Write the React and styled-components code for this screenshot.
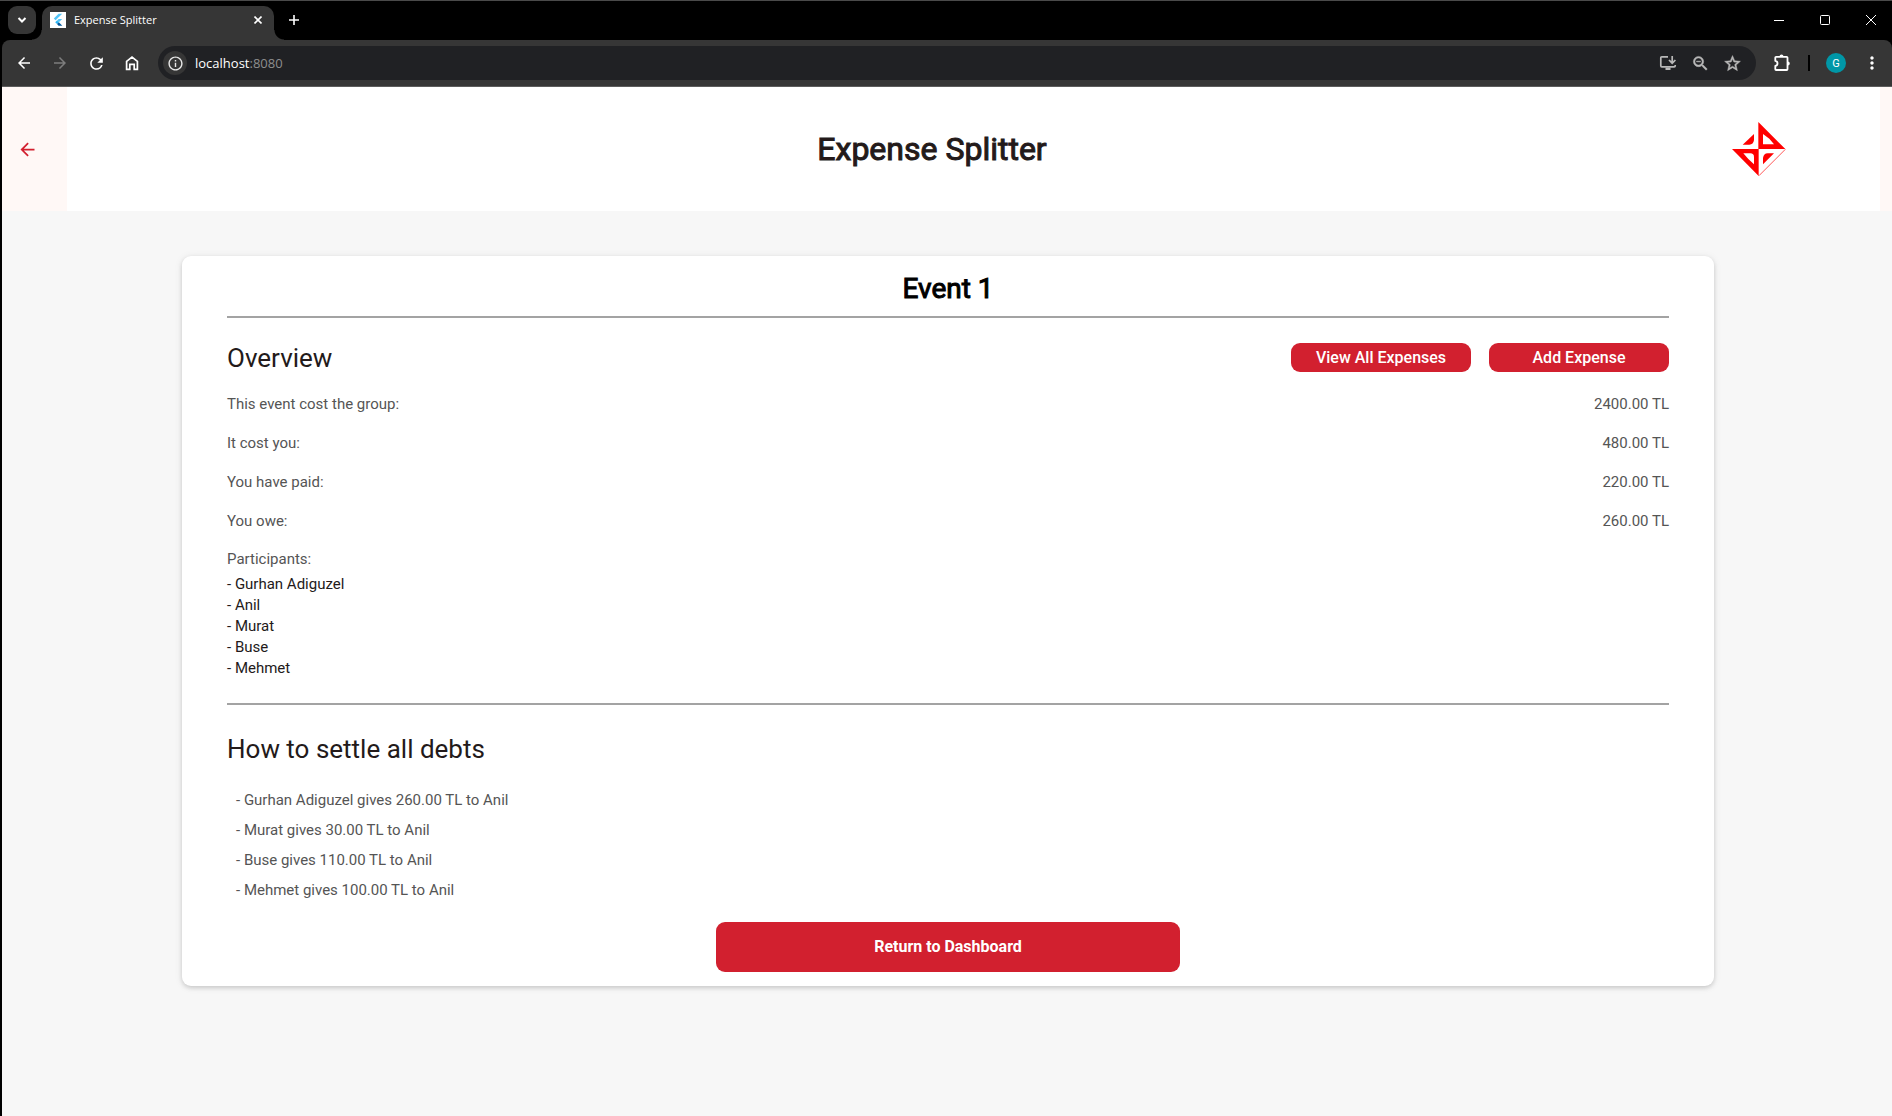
import React from "react";
import styled, { createGlobalStyle, css } from "styled-components";
import {
  MdArrowBack,
  MdArrowForward,
  MdRefresh,
  MdInfoOutline,
  MdZoomOut,
  MdStarBorder,
  MdMoreVert,
} from "react-icons/md";

const overviewRows = [
  { label: "This event cost the group:", amount: "2400.00 TL" },
  { label: "It cost you:", amount: "480.00 TL" },
  { label: "You have paid:", amount: "220.00 TL" },
  { label: "You owe:", amount: "260.00 TL" },
];

const participants = ["Gurhan Adiguzel", "Anil", "Murat", "Buse", "Mehmet"];

const settlements = [
  "Gurhan Adiguzel gives 260.00 TL to Anil",
  "Murat gives 30.00 TL to Anil",
  "Buse gives 110.00 TL to Anil",
  "Mehmet gives 100.00 TL to Anil",
];

const GlobalStyle = createGlobalStyle`
  *, *::before, *::after { box-sizing: border-box; }
  html, body, #root { height: 100%; }
  body {
    margin: 0;
    background: #000;
    font-family: Roboto, "Liberation Sans", sans-serif;
  }
  h1, h2, h3, p, ul, dl, dd { margin: 0; padding: 0; }
  ul { list-style: none; }
  button { border: 0; padding: 0; background: none; font: inherit; cursor: pointer; }
`;

const Window = styled.div`
  display: flex;
  flex-direction: column;
  min-height: 100%;
  padding-left: 2px;
  border-top: 1px solid #4a4a4a;
  background: #000;
`;

/* Browser chrome */

const TabStrip = styled.div`
  display: flex;
  height: 39px;
  padding-left: 6px;
  color: #e8e8e8;
`;

const TabSearch = styled.button`
  display: grid;
  place-items: center;
  width: 28px;
  height: 28px;
  margin: 5px 6px 0 0;
  border-radius: 9px;
  background: #363636;
  color: #fff;
`;

const Tab = styled.div`
  position: relative;
  display: flex;
  align-items: center;
  width: 232px;
  height: 34px;
  margin-top: 5px;
  padding: 0 8px 6px;
  border-radius: 10px 10px 0 0;
  background: #363636;
  color: #fff;

  &::before,
  &::after {
    content: "";
    position: absolute;
    bottom: 0;
    width: 10px;
    height: 10px;
  }
  &::before {
    right: 100%;
    background: radial-gradient(circle at 0 0, transparent 9px, #363636 10px);
  }
  &::after {
    left: 100%;
    background: radial-gradient(circle at 100% 0, transparent 9px, #363636 10px);
  }
`;

const TabTitle = styled.span`
  flex: 1;
  padding-left: 8px;
  font: 11px/16px "Open Sans", "Noto Sans", sans-serif;
`;

const StripButton = styled.button`
  display: grid;
  place-items: center;
  width: ${(p) => p.$width}px;
  height: ${(p) => p.$height}px;
  color: #fff;
`;

const NewTab = styled(StripButton)`
  margin: 5px auto 0 6px;
`;

const WindowControls = styled.div`
  display: flex;
  height: 38px;
`;

const WindowControl = styled.button`
  display: grid;
  place-items: center;
  width: 46px;
  padding-left: 4px;
  color: #fff;
`;

const Toolbar = styled.div`
  display: flex;
  align-items: center;
  height: 47px;
  padding: 0 2px 0 4px;
  border-bottom: 1px solid #5c5c5c;
  border-radius: 8px 8px 0 0;
  background: #363636;
`;

const ToolButton = styled.button`
  display: grid;
  place-items: center;
  width: 36px;
  height: 34px;
  color: ${(p) => (p.$dim ? "#7d7d7d" : "#fff")};
`;

const AddressBar = styled.form`
  display: flex;
  flex: 1;
  align-items: center;
  height: 34px;
  margin: 0 8px;
  padding: 0 8px 0 5px;
  border-radius: 17px;
  background: #202124;
`;

const SiteInfo = styled.button`
  display: grid;
  place-items: center;
  width: 24px;
  height: 24px;
  border-radius: 50%;
  background: #363636;
  color: #e8e8e8;
`;

const Address = styled.div`
  display: flex;
  flex: 1;
  padding-left: 8px;
  color: #fff;
  font: 13px/20px "Open Sans", "Noto Sans", sans-serif;
`;

const Port = styled.span`
  color: #8e8e8e;
`;

const AddressAction = styled.button`
  display: grid;
  place-items: center;
  width: 32px;
  height: 32px;
  color: #b8b8b8;

  svg {
    stroke: currentColor;
  }
  path[fill="none"] {
    stroke: none;
  }
`;

const ToolDivider = styled.span`
  width: 2px;
  height: 16px;
  margin: 0 8px;
  background: #000;
`;

const Avatar = styled.span`
  display: grid;
  place-items: center;
  width: 20px;
  height: 20px;
  border-radius: 50%;
  background: #0097a7;
  color: #fff;
  font-size: 11px;
`;

/* Application */

const Page = styled.div`
  flex: 1;
  background: #f7f7f7;
`;

const Header = styled.header`
  display: grid;
  grid-template-columns: 65px 1fr 148px 12px;
  height: 124px;
  align-items: center;
  background: #fff;
`;

const BackButton = styled.button`
  display: flex;
  align-items: center;
  align-self: stretch;
  padding-left: 15px;
  background: #fff8f6;
  color: #d2202f;
`;

const AppTitle = styled.h1`
  padding-left: 65px;
  color: #231a1a;
  font-size: 32px;
  line-height: 40px;
  font-weight: 400;
  -webkit-text-stroke: 1px currentColor;
  text-align: center;
`;

const HeaderEdge = styled.div`
  align-self: stretch;
  background: #fff8f6;
`;

const Content = styled.main`
  padding: 45px 178px 45px 180px;
`;

const Card = styled.article`
  padding: 17px 45px 14px;
  border-radius: 9px;
  background: #fff;
  box-shadow: 0 2px 4px rgba(0, 0, 0, 0.14), 0 1px 8px rgba(0, 0, 0, 0.08);
`;

const EventTitle = styled.h2`
  padding-bottom: 11px;
  border-bottom: 2px solid #a3a3a3;
  color: #000;
  font-size: 28px;
  line-height: 32px;
  font-weight: 400;
  -webkit-text-stroke: 1px currentColor;
  text-align: center;
`;

const SectionHead = styled.div`
  display: flex;
  align-items: flex-start;
  gap: 18px;
  padding-top: ${(p) => p.$top}px;
`;

const SectionTitle = styled.h3`
  flex: 1;
  color: #231a1a;
  font-size: 26px;
  line-height: 31px;
  font-weight: 400;
`;

const primaryButton = css`
  border-radius: 9px;
  background: #d2202f;
  color: #fff;
  font-size: 16px;
`;

const SmallButton = styled.button`
  ${primaryButton}
  width: 180px;
  height: 29px;
  font-weight: 500;
`;

const LargeButton = styled.button`
  ${primaryButton}
  display: block;
  width: 464px;
  height: 50px;
  margin: 17px auto 0;
  padding-bottom: 2px;
  font-weight: 700;
`;

const Summary = styled.dl`
  padding-top: 11px;
`;

const SummaryRow = styled.div`
  display: flex;
  justify-content: space-between;
  color: #555;
  font-size: 15px;
  line-height: 39px;
`;

const ParticipantsLabel = styled.p`
  padding-top: 4px;
  color: #555;
  font-size: 15px;
  line-height: 29px;
`;

const Participants = styled.ul`
  padding-bottom: 24px;
  border-bottom: 2px solid #a3a3a3;
  color: #231a1a;
  font-size: 15px;
  line-height: 21px;
`;

const Debts = styled.ul`
  padding: 20px 9px 0;
  color: #555;
  font-size: 15px;
  line-height: 30px;
`;

function FlutterIcon() {
  return (
    <svg width="16" height="16" viewBox="0 0 16 16" aria-hidden="true">
      <rect width="16" height="16" fill="#fff" />
      <path d="M8.6 1.7h3.6L5.6 8.3 3.8 6.5z" fill="#54c5f8" />
      <path d="M8.6 7h3.6L8.9 10.3 7 8.7z" fill="#54c5f8" />
      <path d="M5.2 10.3 7 8.5l1.9 1.8L7 12.1z" fill="#29b6f6" />
      <path d="m7 12.1 1.9-1.8 3.4 3.4H8.6z" fill="#01579b" />
    </svg>
  );
}

function HomeIcon() {
  return (
    <svg width="16" height="16" viewBox="0 0 16 16" fill="none" stroke="currentColor" aria-hidden="true">
      <path d="M2.6 14.3V6.4L8 2.1l5.4 4.3v7.9h-3.2V9.4H5.8v4.9z" strokeWidth="1.7" />
    </svg>
  );
}

function InstallIcon() {
  return (
    <svg width="18" height="18" viewBox="0 0 18 18" fill="none" strokeWidth="1.7" aria-hidden="true">
      <path d="M9 2.8H2.8q-1 0-1 1v8q0 1 1 1h12.4q1 0 1-1V11" />
      <path d="M13.2 2v7M10 6l3.2 3.2L16.4 6" />
      <path d="M6.5 14.8h5" strokeWidth="2.4" />
    </svg>
  );
}

function PuzzleIcon() {
  return (
    <svg width="18" height="18" viewBox="0 0 18 18" aria-hidden="true">
      <path
        d="M2.3 3.6q0-.8.8-.8h10.6q.8 0 .8.8v11.6q0 .8-.8.8H3.1q-.8 0-.8-.8v-3.3q2.2-.4 2.2-2.5T2.3 6.9z"
        fill="none"
        stroke="currentColor"
        strokeWidth="1.8"
        strokeLinejoin="round"
      />
      <path d="M6.5 2.6a2 2 0 0 1 4 0zM14.8 7.4a2 2 0 0 1 0 4z" fill="currentColor" />
    </svg>
  );
}

function Logo() {
  return (
    <svg width="54" height="54" viewBox="0 0 162 162" role="img" aria-label="Logo" fill="#f00">
      <path fillRule="evenodd" d="M79 0l81 81H79zM93 36v31h33l-14-17z" />
      <path fillRule="evenodd" d="M0 81h80v81zM34 94l15 17 17 16V105q0-11-11-11z" />
      <path d="M66 36v18q-2 14-14 14H32z" />
      <path d="M93 127v-19q2-14 14-14h19z" />
      <path d="M160 82l-79 79" fill="none" stroke="#f00" strokeWidth="2" />
    </svg>
  );
}

function Browser() {
  return (
    <>
      <TabStrip>
        <TabSearch aria-label="Search tabs">
          <svg width="10" height="10" viewBox="0 0 10 10" fill="none" stroke="currentColor" strokeWidth="2">
            <path d="M1.5 3 5 6.5 8.5 3" />
          </svg>
        </TabSearch>
        <Tab>
          <FlutterIcon />
          <TabTitle>Expense Splitter</TabTitle>
          <StripButton $width={16} $height={16} aria-label="Close tab">
            <svg width="8" height="8" viewBox="0 0 8 8" stroke="currentColor" strokeWidth="1.6">
              <path d="M0.5 0.5l7 7M7.5 0.5l-7 7" />
            </svg>
          </StripButton>
        </Tab>
        <NewTab $width={28} $height={28} aria-label="New tab">
          <svg width="10" height="10" viewBox="0 0 10 10" stroke="currentColor" strokeWidth="1.6">
            <path d="M5 0v10M0 5h10" />
          </svg>
        </NewTab>
        <WindowControls>
          <WindowControl aria-label="Minimize">
            <svg width="10" height="10" viewBox="0 0 10 10" fill="currentColor">
              <rect y="5" width="10" height="1" />
            </svg>
          </WindowControl>
          <WindowControl aria-label="Maximize">
            <svg width="10" height="10" viewBox="0 0 10 10" fill="none" stroke="currentColor">
              <rect x="0.5" y="0.5" width="9" height="9" rx="1" />
            </svg>
          </WindowControl>
          <WindowControl aria-label="Close">
            <svg width="10" height="10" viewBox="0 0 10 10" stroke="currentColor">
              <path d="M0 0l10 10M10 0L0 10" />
            </svg>
          </WindowControl>
        </WindowControls>
      </TabStrip>
      <Toolbar>
        <ToolButton aria-label="Back"><MdArrowBack size={18} /></ToolButton>
        <ToolButton aria-label="Forward" $dim><MdArrowForward size={18} /></ToolButton>
        <ToolButton aria-label="Reload"><MdRefresh size={19} /></ToolButton>
        <ToolButton aria-label="Home"><HomeIcon /></ToolButton>
        <AddressBar>
          <SiteInfo type="button" aria-label="Site information"><MdInfoOutline size={17} /></SiteInfo>
          <Address>localhost<Port>:8080</Port></Address>
          <AddressAction type="button" aria-label="Install app"><InstallIcon /></AddressAction>
          <AddressAction type="button" aria-label="Zoom"><MdZoomOut size={19} strokeWidth={0.6} /></AddressAction>
          <AddressAction type="button" aria-label="Bookmark"><MdStarBorder size={19} strokeWidth={0.6} /></AddressAction>
        </AddressBar>
        <ToolButton aria-label="Extensions"><PuzzleIcon /></ToolButton>
        <ToolDivider />
        <ToolButton aria-label="Profile"><Avatar>G</Avatar></ToolButton>
        <ToolButton aria-label="Menu"><MdMoreVert size={20} /></ToolButton>
      </Toolbar>
    </>
  );
}

export default function App() {
  return (
    <Window>
      <GlobalStyle />
      <Browser />
      <Page>
        <Header>
          <BackButton aria-label="Go back"><MdArrowBack size={21} /></BackButton>
          <AppTitle>Expense Splitter</AppTitle>
          <Logo />
          <HeaderEdge />
        </Header>
        <Content>
          <Card>
            <EventTitle>Event 1</EventTitle>
            <SectionHead $top={25}>
              <SectionTitle>Overview</SectionTitle>
              <SmallButton>View All Expenses</SmallButton>
              <SmallButton>Add Expense</SmallButton>
            </SectionHead>
            <Summary>
              {overviewRows.map((row) => (
                <SummaryRow key={row.label}>
                  <dt>{row.label}</dt>
                  <dd>{row.amount}</dd>
                </SummaryRow>
              ))}
            </Summary>
            <ParticipantsLabel>Participants:</ParticipantsLabel>
            <Participants>
              {participants.map((name) => (
                <li key={name}>- {name}</li>
              ))}
            </Participants>
            <SectionHead $top={29}>
              <SectionTitle>How to settle all debts</SectionTitle>
            </SectionHead>
            <Debts>
              {settlements.map((line) => (
                <li key={line}>- {line}</li>
              ))}
            </Debts>
            <LargeButton>Return to Dashboard</LargeButton>
          </Card>
        </Content>
      </Page>
    </Window>
  );
}
